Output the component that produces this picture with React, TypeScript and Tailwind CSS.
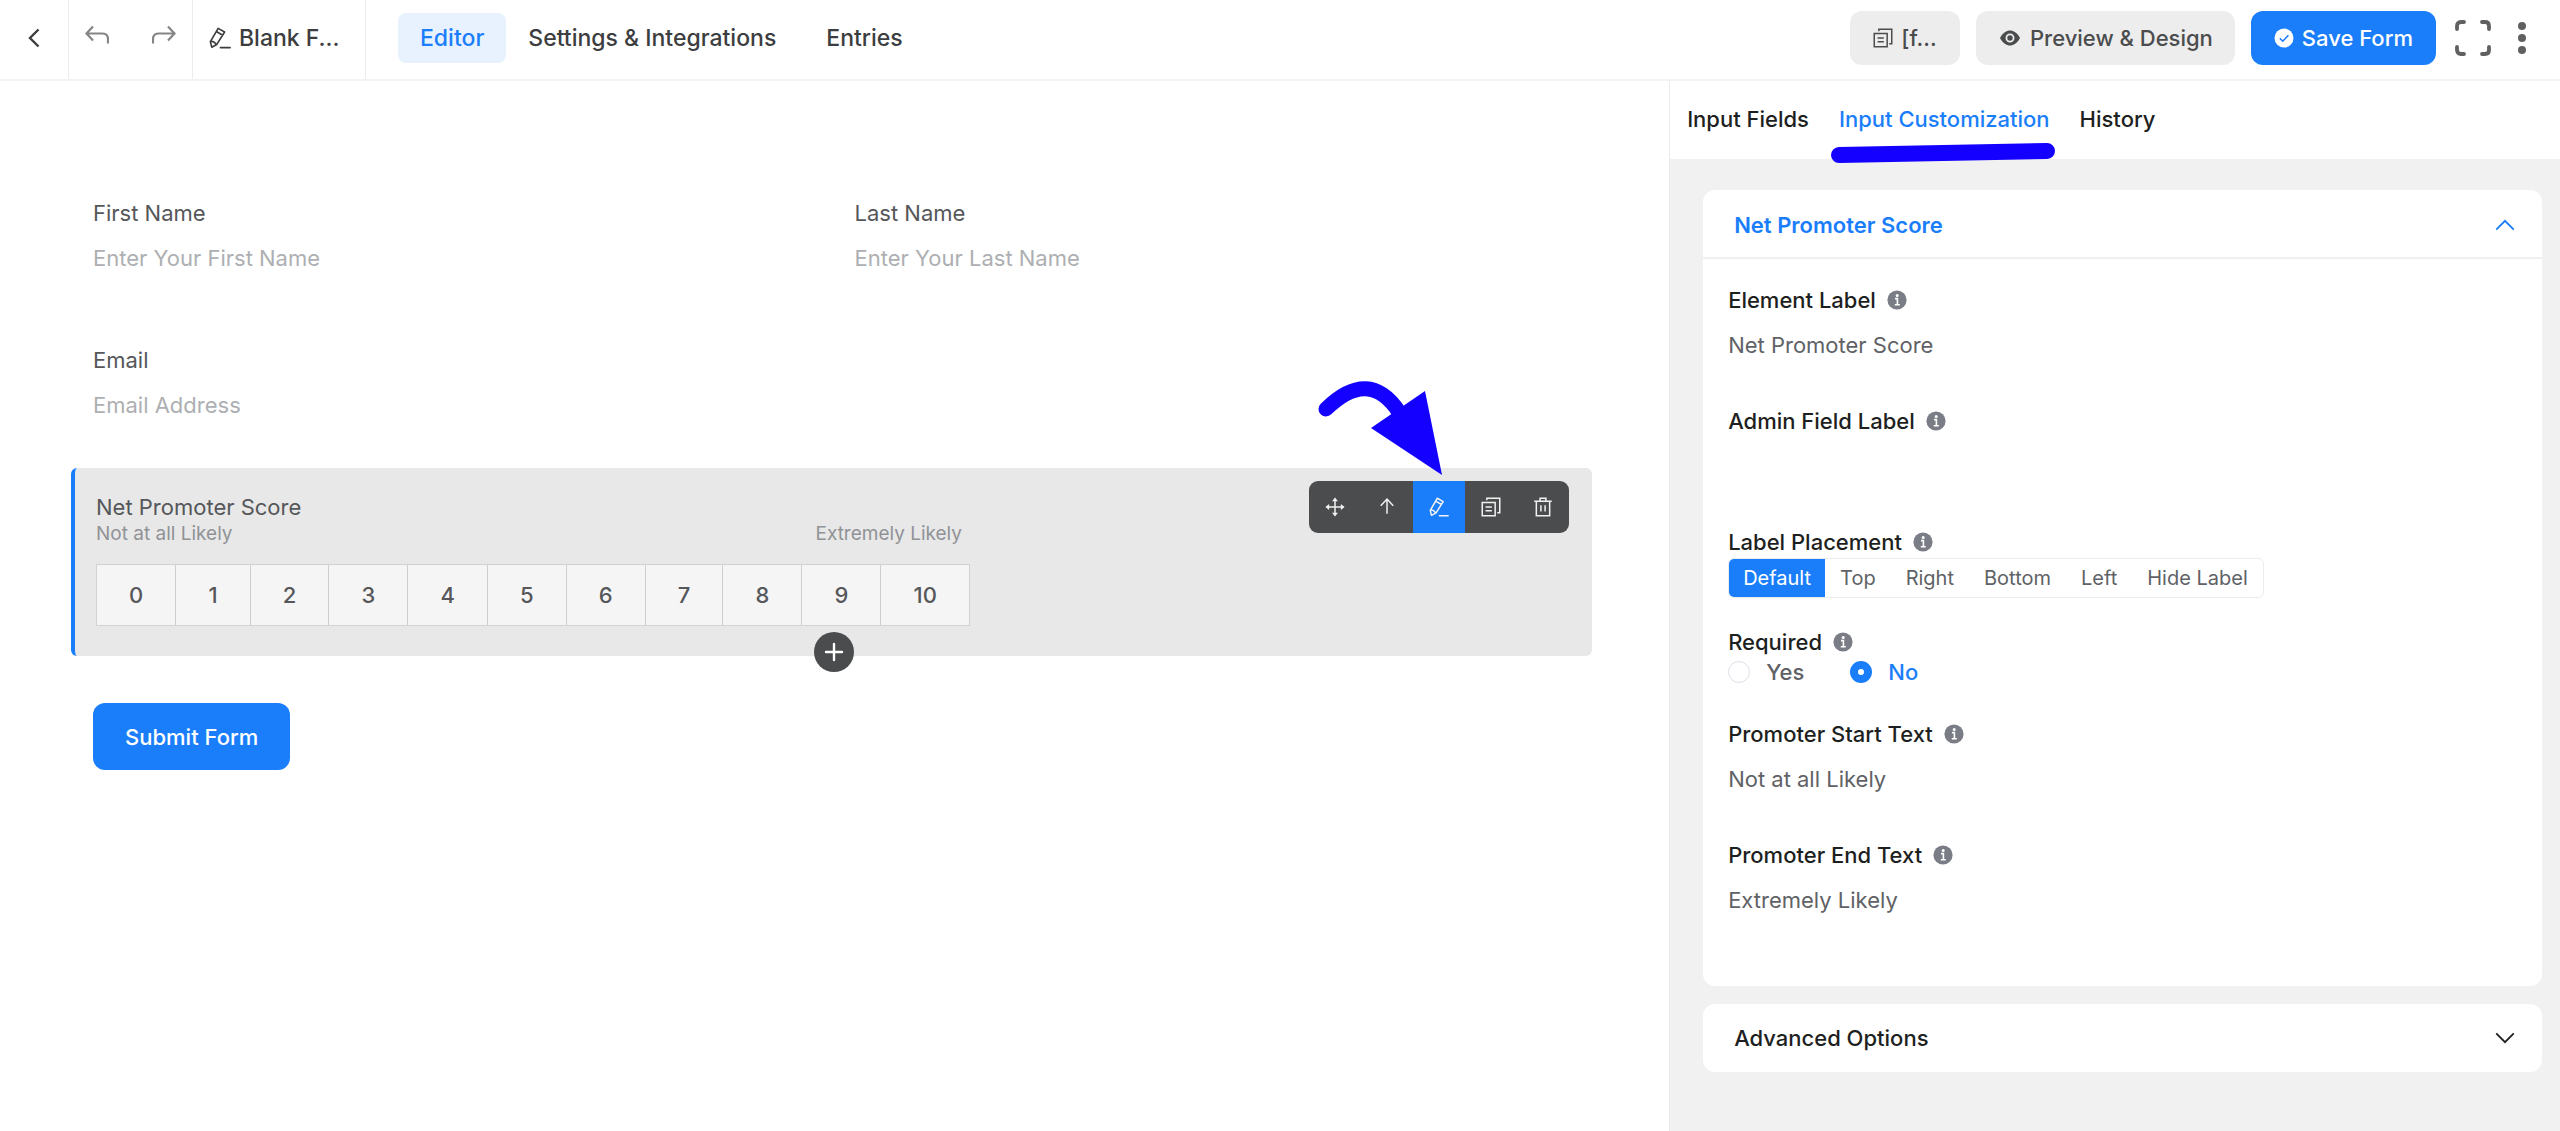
import { useState } from "react";
import type { ReactNode } from "react";

function Icon({ children, className }: { children: ReactNode; className: string }) {
  return (
    <svg viewBox="0 0 24 24" fill="none" stroke="currentColor" strokeWidth={1.8} className={className} aria-hidden="true">
      {children}
    </svg>
  );
}

function PencilIcon({ className }: { className: string }) {
  return (
    <Icon className={className}>
      <path d="M3 22 1.500 16 10 1.500 17 5.500 8.500 19Z M8 5 15 9 M1.800 16 C4 15 7 17 7.800 19.500" strokeLinejoin="round" />
      <path d="M12.500 22.500H23" strokeLinecap="round" />
    </Icon>
  );
}

function CopyIcon({ className }: { className: string }) {
  return (
    <Icon className={className}>
      <path d="M1.500 6.500H17V22.500H1.500Z M7 4V1.500H22.500V19H19.500 M5.500 12H13 M5.500 16.500H13" />
    </Icon>
  );
}

function InfoIcon() {
  return (
    <svg viewBox="0 0 20 20" className="size-5 shrink-0 text-[#7a7d85]" aria-hidden="true">
      <circle cx="10" cy="10" r="9.600" fill="currentColor" />
      <circle cx="10.200" cy="5.500" r="1.500" fill="#fff" />
      <path d="M8 8.600H10.400V14.500M7.800 14.800H12.800" fill="none" stroke="#fff" strokeWidth="1.600" />
    </svg>
  );
}

function FieldLabel({ htmlFor, children }: { htmlFor?: string; children: string }) {
  return (
    <div className="flex h-8 items-center gap-[11px] font-medium text-[#1e1f21]">
      <label htmlFor={htmlFor}>{children}</label>
      <InfoIcon />
    </div>
  );
}

function SettingField({ id, label, value }: { id: string; label: string; value: string }) {
  return (
    <div className="mb-[31px]">
      <FieldLabel htmlFor={id}>{label}</FieldLabel>
      <input id={id} defaultValue={value} className="block h-[58px] w-full bg-transparent text-[#606266] outline-none" />
    </div>
  );
}

function FormField({ id, label, placeholder }: { id: string; label: string; placeholder: string }) {
  return (
    <div>
      <label htmlFor={id} className="block h-8 leading-8 text-[#55575a]">{label}</label>
      <input id={id} placeholder={placeholder} className="block h-[58px] w-full bg-transparent outline-none placeholder:text-[#adafb2]" />
    </div>
  );
}

const scores = ["0", "1", "2", "3", "4", "5", "6", "7", "8", "9", "10"];
const placements = ["Default", "Top", "Right", "Bottom", "Left", "Hide Label"];

function TopBar() {
  return (
    <header className="flex h-[81px] shrink-0 items-stretch border-b-2 border-[#f3f3f3] text-[#3c3d3f]">
      <button aria-label="Back" className="flex w-[69px] items-center justify-center border-r border-[#ececec] pb-1">
        <Icon className="size-6"><path d="M16.500 3.500 8 12 16.500 20.500" strokeWidth={2.400} /></Icon>
      </button>
      <div className="flex w-[124px] items-center justify-between border-r border-[#ececec] px-4 pb-2 text-[#858585]">
        <button aria-label="Undo">
          <Icon className="size-6"><path d="M8 2.500 1.500 9.500 8 16.500 M1.500 9.500H17Q23 9.500 23 15V19.500" strokeWidth={2.200} /></Icon>
        </button>
        <button aria-label="Redo">
          <Icon className="size-6"><path d="M16 2.500 22.500 9.500 16 16.500 M22.500 9.500H7Q1 9.500 1 15V19.500" strokeWidth={2.200} /></Icon>
        </button>
      </div>
      <button className="flex w-[173px] items-center gap-2 border-r border-[#ececec] pb-1 pl-4 text-[23px] font-medium">
        <PencilIcon className="size-[22px]" />
        <span className="whitespace-nowrap">Blank F...</span>
      </button>
      <nav className="ml-8 flex items-center pb-1 text-[23px] font-medium">
        <a href="#editor" className="rounded-lg bg-[#e8f2ff] px-[22px] py-[9px] leading-8 text-[#1a7efb]">Editor</a>
        <a href="#settings" className="px-[22px]">Settings &amp; Integrations</a>
        <a href="#entries" className="px-7">Entries</a>
      </nav>
      <div className="ml-auto flex items-center gap-4 pb-1 font-medium text-[#4b4c4d]">
        <button className="flex h-[54px] w-[110px] items-center justify-center gap-2 rounded-xl bg-[#ededed]">
          <CopyIcon className="size-5" />
          <span>[f...</span>
        </button>
        <button className="flex h-[54px] items-center gap-2 rounded-xl bg-[#ededed] px-[22px]">
          <svg viewBox="0 0 24 24" className="size-6" aria-hidden="true">
            <path d="M2 12C5 6.500 8.500 4.500 12 4.500S19 6.500 22 12C19 17.500 15.500 19.500 12 19.500S5 17.500 2 12Z" fill="currentColor" />
            <circle cx="12" cy="12" r="3.600" fill="currentColor" stroke="#ededed" strokeWidth="1.800" />
          </svg>
          Preview &amp; Design
        </button>
        <button className="flex h-[54px] items-center gap-2 rounded-xl bg-[#1a7efb] px-[23px] text-white">
          <svg viewBox="0 0 20 20" className="size-5" aria-hidden="true">
            <circle cx="10" cy="10" r="9.500" fill="currentColor" />
            <path d="M5.800 10.200 8.800 13.200 14.400 7.200" fill="none" stroke="#1a7efb" strokeWidth="1.600" />
          </svg>
          Save Form
        </button>
        <button aria-label="Full screen" className="mx-[3px] text-[#606060]">
          <svg viewBox="0 0 36 36" className="size-9" aria-hidden="true">
            <path d="M2 9V6Q2 2 6 2H9M27 2H30Q34 2 34 6V9M34 27V30Q34 34 30 34H27M9 34H6Q2 34 2 30V27" fill="none" stroke="currentColor" strokeWidth="3.800" strokeLinecap="round" />
          </svg>
        </button>
        <button aria-label="More" className="mr-[26px] text-[#606060]">
          <svg viewBox="0 0 24 36" className="h-9 w-6" aria-hidden="true">
            <circle cx="12" cy="6" r="4" fill="currentColor" />
            <circle cx="12" cy="18" r="4" fill="currentColor" />
            <circle cx="12" cy="30" r="4" fill="currentColor" />
          </svg>
        </button>
      </div>
    </header>
  );
}

function FieldToolbar() {
  return (
    <div className="absolute top-[13px] right-[23px] flex h-[52px] overflow-hidden rounded-[9px] bg-[#4b4c4d] text-[#f1f1f1]">
      <button aria-label="Move" className="flex w-[52px] items-center justify-center">
        <Icon className="size-5">
          <path d="M12 2V22M2 12H22" />
          <path d="M12 .5 15.500 5H8.500ZM12 23.500 8.500 19H15.500ZM.5 12 5 8.500V15.500ZM23.500 12 19 15.500V8.500Z" fill="currentColor" stroke="none" />
        </Icon>
      </button>
      <button aria-label="Move up" className="flex w-[52px] items-center justify-center">
        <Icon className="size-5"><path d="M12 20V2.500M4.500 10.500 12 2.500 19.500 10.500" /></Icon>
      </button>
      <button aria-label="Edit" className="flex w-[52px] items-center justify-center bg-[#1a7efb]">
        <PencilIcon className="size-5" />
      </button>
      <button aria-label="Duplicate" className="flex w-[52px] items-center justify-center">
        <CopyIcon className="size-5" />
      </button>
      <button aria-label="Delete" className="flex w-[52px] items-center justify-center">
        <Icon className="size-5"><path d="M1.500 5H22.500M4 5V22.500H20V5M8.500 5V1.500H15.500V5M9.500 10V17.500M14.500 10V17.500" /></Icon>
      </button>
    </div>
  );
}

function FormCanvas() {
  return (
    <main className="min-w-0 flex-1 pt-[116px] pr-[77px] pl-[71px]">
      <div className="grid grid-cols-2 gap-x-6 gap-y-[57px] pl-[22px]">
        <FormField id="first-name" label="First Name" placeholder="Enter Your First Name" />
        <FormField id="last-name" label="Last Name" placeholder="Enter Your Last Name" />
        <FormField id="email" label="Email" placeholder="Email Address" />
      </div>

      <section className="relative mt-[34px] h-[188px] rounded-md border-l-4 border-[#1a7efb] bg-[#e8e8e8] pt-6 pl-[21px]">
        <h2 className="leading-[30px] text-[#55575a]">Net Promoter Score</h2>
        <div className="flex w-[866px] justify-between text-[19px] leading-6 text-[#909296]">
          <span>Not at all Likely</span>
          <span>Extremely Likely</span>
        </div>
        <div className="mt-[18px] flex h-[62px] w-[874px] border border-[#d2d2d2] bg-[#f5f5f5] font-medium text-[#55575a]">
          {scores.map((s) => (
            <button key={s} className="flex-auto border-r border-[#cfcfcf] px-7 last:border-r-0">{s}</button>
          ))}
        </div>
        <FieldToolbar />

        {/* Pointer to the edit button */}
        <svg viewBox="0 0 124 94" className="absolute right-[149px] bottom-[180px] h-[94px] w-[124px] overflow-visible text-[#1400ff]" aria-hidden="true">
          <path d="M7 27Q50 -15 80 30" fill="none" stroke="currentColor" strokeWidth="15" strokeLinecap="round" />
          <path d="M106 9 52 46 123 93Z" fill="currentColor" />
        </svg>

        <button aria-label="Add field" className="absolute -bottom-4 left-1/2 flex size-10 -translate-x-1/2 items-center justify-center rounded-full bg-[#4b4c4d] text-white">
          <Icon className="size-6"><path d="M12 4V20M4 12H20" strokeWidth={2.400} strokeLinecap="round" /></Icon>
        </button>
      </section>

      <button className="mt-[47px] ml-[22px] h-[67px] rounded-xl bg-[#1a7efb] px-8 font-medium text-white">Submit Form</button>
    </main>
  );
}

function Sidebar() {
  const [placement, setPlacement] = useState("Default");
  const [required, setRequired] = useState("No");

  return (
    <aside className="w-[34.8%] shrink-0 border-l border-[#ececec] bg-[#f1f1f1]">
      <nav className="flex h-[78px] items-center gap-[30px] bg-white pb-[2px] pl-[17px] font-medium text-[#1e1f21]">
        <a href="#fields">Input Fields</a>
        <a href="#customization" className="relative text-[#1a7efb]">
          Input Customization
          {/* Hand-drawn marker under the active tab */}
          <svg viewBox="0 0 224 20" className="absolute top-10 -left-2 h-5 w-[224px] max-w-none text-[#1400ff]" aria-hidden="true">
            <path d="M8 12 216 8" stroke="currentColor" strokeWidth="16" strokeLinecap="round" />
          </svg>
        </a>
        <a href="#history">History</a>
      </nav>

      <div className="space-y-[18px] pt-[31px] pr-[18px] pl-[33px]">
        <section className="rounded-xl bg-white">
          <button className="flex h-[69px] w-full items-center justify-between border-b-2 border-[#f0f0f0] pt-[2px] pr-[27px] pl-[31px] font-semibold text-[#1a7efb]">
            Net Promoter Score
            <Icon className="size-5"><path d="M1.500 17.500 12 7 22.500 17.500" strokeWidth={2.200} /></Icon>
          </button>
          <div className="px-[25px] pt-[25px] pb-[26px]">
            <SettingField id="element-label" label="Element Label" value="Net Promoter Score" />
            <SettingField id="admin-label" label="Admin Field Label" value="" />

            <FieldLabel>Label Placement</FieldLabel>
            <div className="mb-7 flex h-10 w-fit overflow-hidden rounded-md border border-[#ececec] text-xl text-[#606266]">
              {placements.map((p) => (
                <button
                  key={p}
                  onClick={() => setPlacement(p)}
                  className={p === placement ? "bg-[#1a7efb] px-[14px] text-white" : "px-[15px]"}
                >
                  {p}
                </button>
              ))}
            </div>

            <FieldLabel>Required</FieldLabel>
            <div className="mb-8 flex h-7 items-center gap-[46px]">
              {["Yes", "No"].map((r) => (
                <label key={r} className={r === required ? "flex items-center gap-4 font-medium text-[#1a7efb]" : "flex items-center gap-4 font-medium text-[#606266]"}>
                  <input
                    type="radio"
                    name="required"
                    checked={r === required}
                    onChange={() => setRequired(r)}
                    className="size-[22px] appearance-none rounded-full border border-[#dcdfe6] bg-white checked:border-8 checked:border-[#1a7efb]"
                  />
                  {r}
                </label>
              ))}
            </div>

            <SettingField id="start-text" label="Promoter Start Text" value="Not at all Likely" />
            <SettingField id="end-text" label="Promoter End Text" value="Extremely Likely" />
          </div>
        </section>

        <section className="rounded-xl bg-white">
          <button className="flex h-[68px] w-full items-center justify-between pr-[27px] pl-[31px] font-medium text-[#1e1f21]">
            Advanced Options
            <Icon className="size-5"><path d="M1.500 6.500 12 17 22.500 6.500" strokeWidth={2.200} /></Icon>
          </button>
        </section>
      </div>
    </aside>
  );
}

export default function App() {
  return (
    <div className="flex min-h-screen flex-col bg-white font-['Inter',sans-serif] text-[22px] leading-8">
      <TopBar />
      <div className="flex flex-1">
        <FormCanvas />
        <Sidebar />
      </div>
    </div>
  );
}
